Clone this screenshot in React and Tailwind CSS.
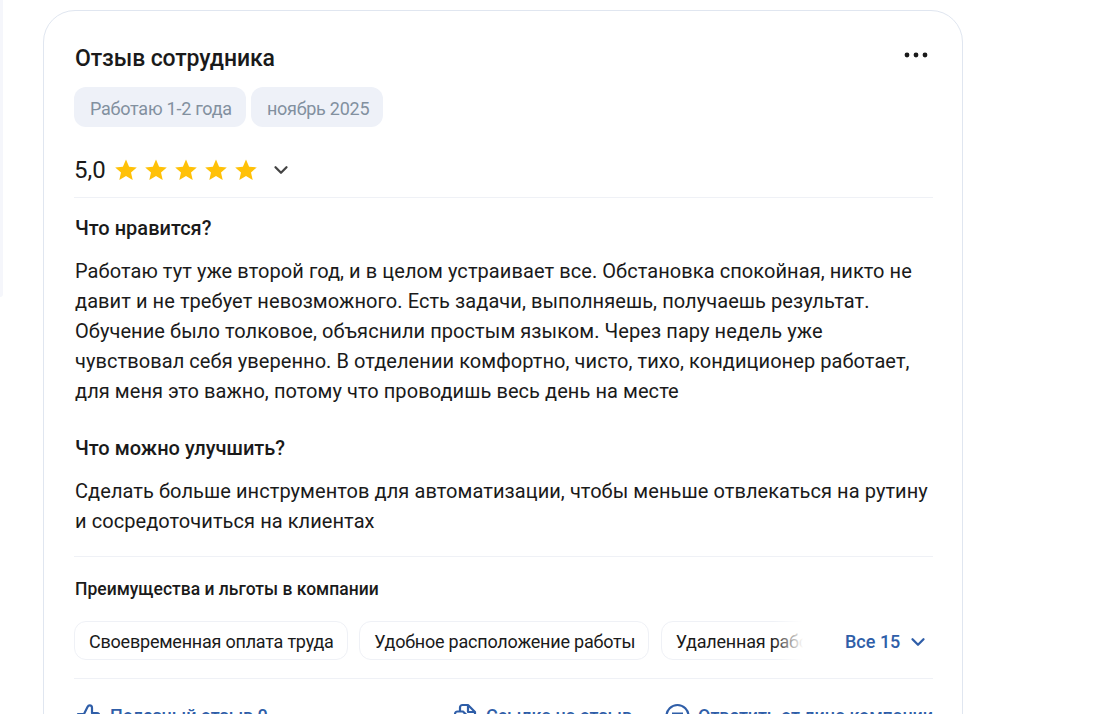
import { ChevronDown } from "lucide-react";

const perks = ["Своевременная оплата труда", "Удобное расположение работы", "Удаленная работа"];

const Star = () => (
  <svg viewBox="0 0 24 24" className="w-[24px] h-[24px] fill-[#ffc107] shrink-0">
    <path d="M12 1.6l3.1 7.1 7.7.7-5.8 5.1 1.7 7.6-6.7-4-6.7 4 1.7-7.6-5.8-5.1 7.7-.7z" />
  </svg>
);

const ThumbIcon = () => (
  <svg viewBox="0 0 26 26" fill="none" stroke="#2f5ea8" strokeWidth="2.2" strokeLinejoin="round" className="w-[26px] h-[26px] shrink-0">
    <path d="M9 11l3.500-7c.5-1 1.300-1.600 2.200-1.600 1.300 0 2.300 1 2.300 2.400V10h5c1.400 0 2.400 1.200 2.100 2.600l-1.800 8c-.2 1-1.100 1.800-2.100 1.800H9zM3 11h6v11.400H3z" />
  </svg>
);

const LinkIcon = () => (
  <svg viewBox="0 0 26 26" fill="none" stroke="#2f5ea8" strokeWidth="2.2" strokeLinejoin="round" className="w-[26px] h-[26px] shrink-0">
    <path d="M8 8V4.500C8 3 9 2 10.500 2H16l7 7v9c0 1.500-1 2.500-2.500 2.500H18" />
    <path d="M16 2v7h7" />
    <path d="M3 11c0-1.500 1-2.500 2.500-2.500H11l7 7V22c0 1.500-1 2.500-2.500 2.500h-10C4 24.500 3 23.500 3 22z" />
  </svg>
);

const ReplyIcon = () => (
  <svg viewBox="0 0 26 26" fill="none" stroke="#2f5ea8" strokeWidth="2.2" className="w-[26px] h-[26px] shrink-0">
    <circle cx="12.500" cy="13" r="11" />
    <path d="M7 10.500h11M7 15h11" />
  </svg>
);

export default function App() {
  return (
    <div className="flex items-start h-[714px] overflow-hidden bg-white font-['Roboto',sans-serif] text-[#1a1a1a]">
      <div className="w-[3px] h-[297px] shrink-0 bg-[#f5f6fb] rounded-br-[4px]" />

      <div className="ml-[40px] mt-[10px] w-[920px] shrink-0 border border-[#e0e6f0] rounded-[32px] bg-white pl-[30px] pr-[29px] pt-[33px] pb-[60px]">
        <div className="flex justify-between items-start">
          <h2 className="text-[23px] leading-[30px] font-medium tracking-[-0.1px] ml-[1px]">Отзыв сотрудника</h2>
          <svg viewBox="0 0 24 6" className="w-[24px] h-[6px] mt-[8px] mr-[5px] fill-[#1a1a1a]">
            <circle cx="3" cy="3" r="2.400" />
            <circle cx="12" cy="3" r="2.400" />
            <circle cx="21" cy="3" r="2.400" />
          </svg>
        </div>

        <div className="flex gap-[5px] mt-[13px]">
          <span className="h-[40px] pl-[16px] pr-[14px] pt-[2px] flex items-center rounded-[12px] bg-[#eef1f8] text-[18px] tracking-[-0.25px] text-[#82909f]">Работаю 1-2 года</span>
          <span className="h-[40px] pl-[16px] pr-[14px] pt-[2px] flex items-center rounded-[12px] bg-[#eef1f8] text-[18px] tracking-[-0.25px] text-[#82909f]">ноябрь 2025</span>
        </div>

        <div className="flex items-center mt-[23px] h-[40px]">
          <span className="text-[24px] leading-[28px] mr-[8px]">5,0</span>
          <div className="flex gap-[6px]">
            <Star /><Star /><Star /><Star /><Star />
          </div>
          <ChevronDown className="w-[22px] h-[22px] ml-[12px] text-[#444]" strokeWidth={2.5} />
        </div>

        <div className="border-t border-[#eff1f6] mt-[7px]" />

        <h3 className="text-[20px] leading-[30px] font-medium mt-[15px] ml-[1px]">Что нравится?</h3>
        <p className="text-[20px] leading-[30px] tracking-[0.07px] mt-[13px] ml-[1px]">
          Работаю тут уже второй год, и в целом устраивает все. Обстановка спокойная, никто не давит и не требует невозможного. Есть задачи, выполняешь, получаешь результат. Обучение было толковое, объяснили простым языком. Через пару недель уже чувствовал себя уверенно. В отделении комфортно, чисто, тихо, кондиционер работает, для меня это важно, потому что проводишь весь день на месте
        </p>

        <h3 className="text-[20px] leading-[30px] font-medium mt-[27px] ml-[1px]">Что можно улучшить?</h3>
        <p className="text-[20px] leading-[30px] tracking-[0.07px] mt-[13px] ml-[1px]">
          Сделать больше инструментов для автоматизации, чтобы меньше отвлекаться на рутину и сосредоточиться на клиентах
        </p>

        <div className="border-t border-[#eff1f6] mt-[20px]" />

        <h4 className="text-[17.5px] leading-[24px] font-medium mt-[20px] ml-[1px]">Преимущества и льготы в компании</h4>

        <div className="flex items-center mt-[20px]">
          <div className="relative flex gap-[11.5px] w-[729px] overflow-hidden">
            {perks.map((p) => (
              <span key={p} className="h-[39px] pl-[14px] pr-[13px] pt-[2px] flex items-center shrink-0 border border-[#eff1f6] rounded-[12px] text-[18px] tracking-[-0.22px] whitespace-nowrap">{p}</span>
            ))}
            <div className="absolute right-0 top-0 h-full w-[30px] bg-gradient-to-r from-transparent to-white" />
          </div>
          <button className="flex items-center ml-[42px] pt-[2px] text-[18px] font-medium text-[#2f5ea8]">
            Все 15
            <ChevronDown className="w-[22px] h-[22px] ml-[7px]" strokeWidth={2.5} />
          </button>
        </div>

        <div className="border-t border-[#eff1f6] mt-[18px]" />

        <div className="flex items-center justify-between mt-[23px] ml-[1px] text-[18px] font-medium tracking-[-0.08px] text-[#2f5ea8]">
          <a className="flex items-center gap-[9px]"><ThumbIcon />Полезный отзыв 0</a>
          <div className="flex items-center gap-[33px]">
            <a className="flex items-center gap-[8px]"><LinkIcon />Ссылка на отзыв</a>
            <a className="flex items-center gap-[7px]"><ReplyIcon />Ответить от лица компании</a>
          </div>
        </div>
      </div>
    </div>
  );
}
